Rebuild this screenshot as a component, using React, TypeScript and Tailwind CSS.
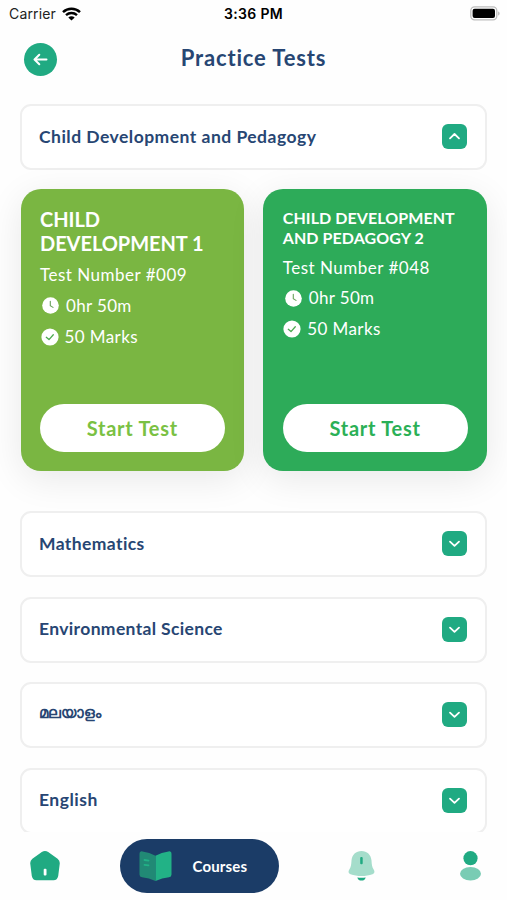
import React from 'react';

interface PracticeTest {
  title: string;
  number: string;
  duration: string;
  marks: string;
  cardClass: string;
  titleClass: string;
  buttonClass: string;
}

const tests: PracticeTest[] = [
  {
    title: 'CHILD DEVELOPMENT 1',
    number: '#009',
    duration: '0hr 50m',
    marks: '50 Marks',
    cardClass: 'bg-[#7ab642] pt-[19px]',
    titleClass: 'text-[20px] leading-[23.5px] tracking-[-0.05px]',
    buttonClass: 'text-[#7ac143]',
  },
  {
    title: 'CHILD DEVELOPMENT AND PEDAGOGY 2',
    number: '#048',
    duration: '0hr 50m',
    marks: '50 Marks',
    cardClass: 'bg-[#2dab59] pt-[18.5px]',
    titleClass: 'text-[16px] leading-[20px] tracking-[0.08px] -mr-4',
    buttonClass: 'text-[#2bb056]',
  },
];

const subjects = [
  { name: 'Mathematics', nameClass: 'tracking-[0.4px]' },
  { name: 'Environmental Science', nameClass: 'tracking-[0.35px]' },
  { name: 'മലയാളം', nameClass: 'text-[15.2px] pb-[5px]' },
  { name: 'English', nameClass: 'tracking-[0.5px]' },
];

const StatusBar: React.FC = () => (
  <div className="grid h-[27px] grid-cols-3 items-center px-[9px] font-['Inter',sans-serif] text-black">
    <div className="flex items-center gap-[6px]">
      <span className="text-[14px] tracking-[0.15px] text-[#222]">Carrier</span>
      <svg width="19" height="14" viewBox="0 0 19 14" fill="none" stroke="#000">
        <path d="M1 5.1C5.8 0.6 13.2 0.6 18 5.1" strokeWidth="2.5" />
        <path d="M4 8.2C7.2 5.3 11.8 5.3 15 8.2" strokeWidth="2.4" />
        <path d="M6.3 10.5C8.2 8.9 10.8 8.9 12.7 10.5L9.5 13.6Z" fill="#000" stroke="none" />
      </svg>
    </div>
    <span className="text-center text-[14px] font-semibold tracking-[0.35px]">3:36 PM</span>
    <svg className="-mr-[2px] justify-self-end" width="30" height="15" viewBox="0 0 30 15">
      <rect x="0.8" y="0.9" width="26" height="13" rx="3.8" fill="#fff" stroke="#bdbdbd" strokeWidth="1.3" />
      <rect x="2.6" y="2.7" width="22.4" height="9.4" rx="2" fill="#000" />
      <path d="M28.2 5.5c1.8 0.5 1.8 3.5 0 4Z" fill="#b5b5b5" />
    </svg>
  </div>
);

const Toggle: React.FC<{ open?: boolean }> = ({ open }) => (
  <span className="mb-[1px] flex size-[25px] items-center justify-center rounded-[6px] bg-[#20aa82]">
    <svg width="13" height="9" viewBox="0 0 13 9" fill="none" stroke="#fff" strokeWidth="1.8" strokeLinecap="round" strokeLinejoin="round">
      <path d={open ? 'M2 6.3L6.5 2L11 6.3' : 'M2 2.6L6.5 6.9L11 2.6'} />
    </svg>
  </span>
);

const Subject: React.FC<{ name: string; nameClass: string; open?: boolean }> = ({ name, nameClass, open }) => (
  <button className="flex h-[66px] w-full shrink-0 items-center justify-between rounded-[11px] border-2 border-[#efefef] bg-white pr-[18.5px] pl-[17px] text-[17.5px] font-bold text-[#274673]">
    <span className={nameClass}>{name}</span>
    <Toggle open={open} />
  </button>
);

const TestCard: React.FC<{ test: PracticeTest }> = ({ test }) => (
  <div className={`flex h-[282px] flex-col rounded-[20px] px-[19.5px] pb-[19.5px] text-white shadow-[0_8px_36px_rgba(0,0,0,0.09)] ${test.cardClass}`}>
    <h2 className={`font-bold ${test.titleClass}`}>{test.title}</h2>
    <p className="mt-[5px] text-[17px] leading-[30px] tracking-[0.5px] whitespace-nowrap">Test Number {test.number}</p>
    <div className="flex h-[31px] items-center gap-[7px] pl-[2px] text-[17px] tracking-[0.35px]">
      <svg width="17" height="17" viewBox="0 0 17 17" fill="none">
        <circle cx="8.5" cy="8.5" r="8.3" fill="#fff" />
        <path d="M8.3 4.3V8.8L11 10.4" className="stroke-[#68a25a]" strokeWidth="1.1" strokeLinecap="round" />
      </svg>
      <span>{test.duration}</span>
    </div>
    <div className="flex h-[31px] items-center gap-[6px] pl-[0.5px] text-[17px] tracking-[0.4px]">
      <svg width="18" height="18" viewBox="0 0 18 18" fill="none">
        <circle cx="9" cy="9" r="8.6" fill="#fff" />
        <path d="M5.3 9.3L8 11.6L12.3 6.8" className="stroke-[#4caa50]" strokeWidth="1.3" strokeLinecap="round" strokeLinejoin="round" />
      </svg>
      <span>{test.marks}</span>
    </div>
    <button className={`mt-auto h-[48px] rounded-full bg-white text-[20px] font-bold tracking-[0.75px] ${test.buttonClass}`}>
      Start Test
    </button>
  </div>
);

const BottomNav: React.FC = () => (
  <nav className="flex h-[68px] shrink-0 items-start bg-[#fefefe] pt-[7px] pl-[30px]">
    <svg className="mt-[11px]" width="30" height="32" viewBox="0 0 30 32">
      <path d="M11.8 2Q15 0 18.2 2L27.6 8.8Q30.2 10.9 29.7 14L28.2 26Q27.4 30.2 23.5 30.2H6.5Q2.6 30.2 1.8 26L0.3 14Q-0.2 10.9 2.4 8.8Z" fill="#20aa82" />
      <rect x="13.7" y="18.8" width="2.8" height="6.6" rx="1" fill="#fff" />
    </svg>
    <button className="ml-[60px] flex h-[54px] w-[159px] items-center rounded-full bg-[#1b3c67] pl-[19px] text-white">
      <svg width="33" height="32" viewBox="0 0 33 32">
        <path d="M0.5 4.2Q0.5 1 3.5 1.4Q10.5 2.2 16.5 5.8V31Q10 27.8 3 27.3Q0.5 27 0.5 24.5Z" fill="#218975" />
        <path d="M16.5 5.8Q22.5 2.2 29.5 1.4Q32.5 1 32.5 4.2V24.5Q32.5 27 30 27.3Q23 27.8 16.5 31Z" fill="#22b286" />
        <path d="M5.5 10L9.5 10.6M5.5 14.8L9.5 15.4" stroke="#22b286" strokeWidth="1.8" strokeLinecap="round" />
      </svg>
      <span className="ml-[20.5px] text-[15px] font-bold tracking-[0.15px]">Courses</span>
    </button>
    <svg className="mt-[11px] ml-[69px]" width="27" height="32" viewBox="0 0 27 32">
      <path d="M13.5 1C19 1 23 4.8 23.5 10.5C23.8 15 24 17.2 25.8 19.7C27 21.5 26.5 23.5 24.5 24.2C18 26.6 9 26.6 2.5 24.2C0.5 23.5 0 21.5 1.2 19.7C3 17.2 3.2 15 3.5 10.5C4 4.8 8 1 13.5 1Z" fill="#a5ddcb" />
      <rect x="12.2" y="7" width="2.5" height="7.2" rx="1" fill="#20aa82" />
      <path d="M9.3 27.4Q13.5 28.2 17.7 27.4Q16.6 30.6 13.5 30.6Q10.4 30.6 9.3 27.4Z" fill="#20aa82" />
    </svg>
    <svg className="mt-[11px] ml-[85px]" width="22" height="32" viewBox="0 0 22 32">
      <circle cx="10.5" cy="8.2" r="7.1" fill="#20aa82" />
      <ellipse cx="10.5" cy="23.7" rx="10.5" ry="6.7" fill="#79ccb4" />
    </svg>
  </nav>
);

const App: React.FC = () => {
  return (
    <div className="flex h-[900px] w-[507px] flex-col overflow-hidden bg-[#fefefe] font-['Lato',sans-serif]">
      <StatusBar />
      <header className="grid h-[64px] shrink-0 grid-cols-[33px_1fr_33px] items-center px-[23.5px]">
        <button className="flex size-[33px] items-center justify-center rounded-full bg-[#20aa82]">
          <svg width="15" height="13" viewBox="0 0 15 13" fill="none" stroke="#fff" strokeWidth="2" strokeLinecap="round" strokeLinejoin="round">
            <path d="M13.5 6.5H1.7M6.3 1.8L1.5 6.5L6.3 11.2" />
          </svg>
        </button>
        <h1 className="pb-[3px] text-center text-[22px] font-bold tracking-[0.85px] text-[#274673]">Practice Tests</h1>
      </header>

      <main className="flex min-h-0 flex-1 flex-col overflow-hidden px-[20px] pt-[13px]">
        <Subject name="Child Development and Pedagogy" nameClass="tracking-[0.48px]" open />
        <div className="mt-[19px] mb-[40px] grid grid-cols-2 gap-[19px] pr-[-0.5px] pl-[0.5px]">
          {tests.map((test) => (
            <TestCard key={test.number} test={test} />
          ))}
        </div>
        <div className="flex flex-col gap-[19.5px]">
          {subjects.map((subject) => (
            <Subject key={subject.name} {...subject} />
          ))}
        </div>
      </main>

      <BottomNav />
    </div>
  );
};

export default App;
